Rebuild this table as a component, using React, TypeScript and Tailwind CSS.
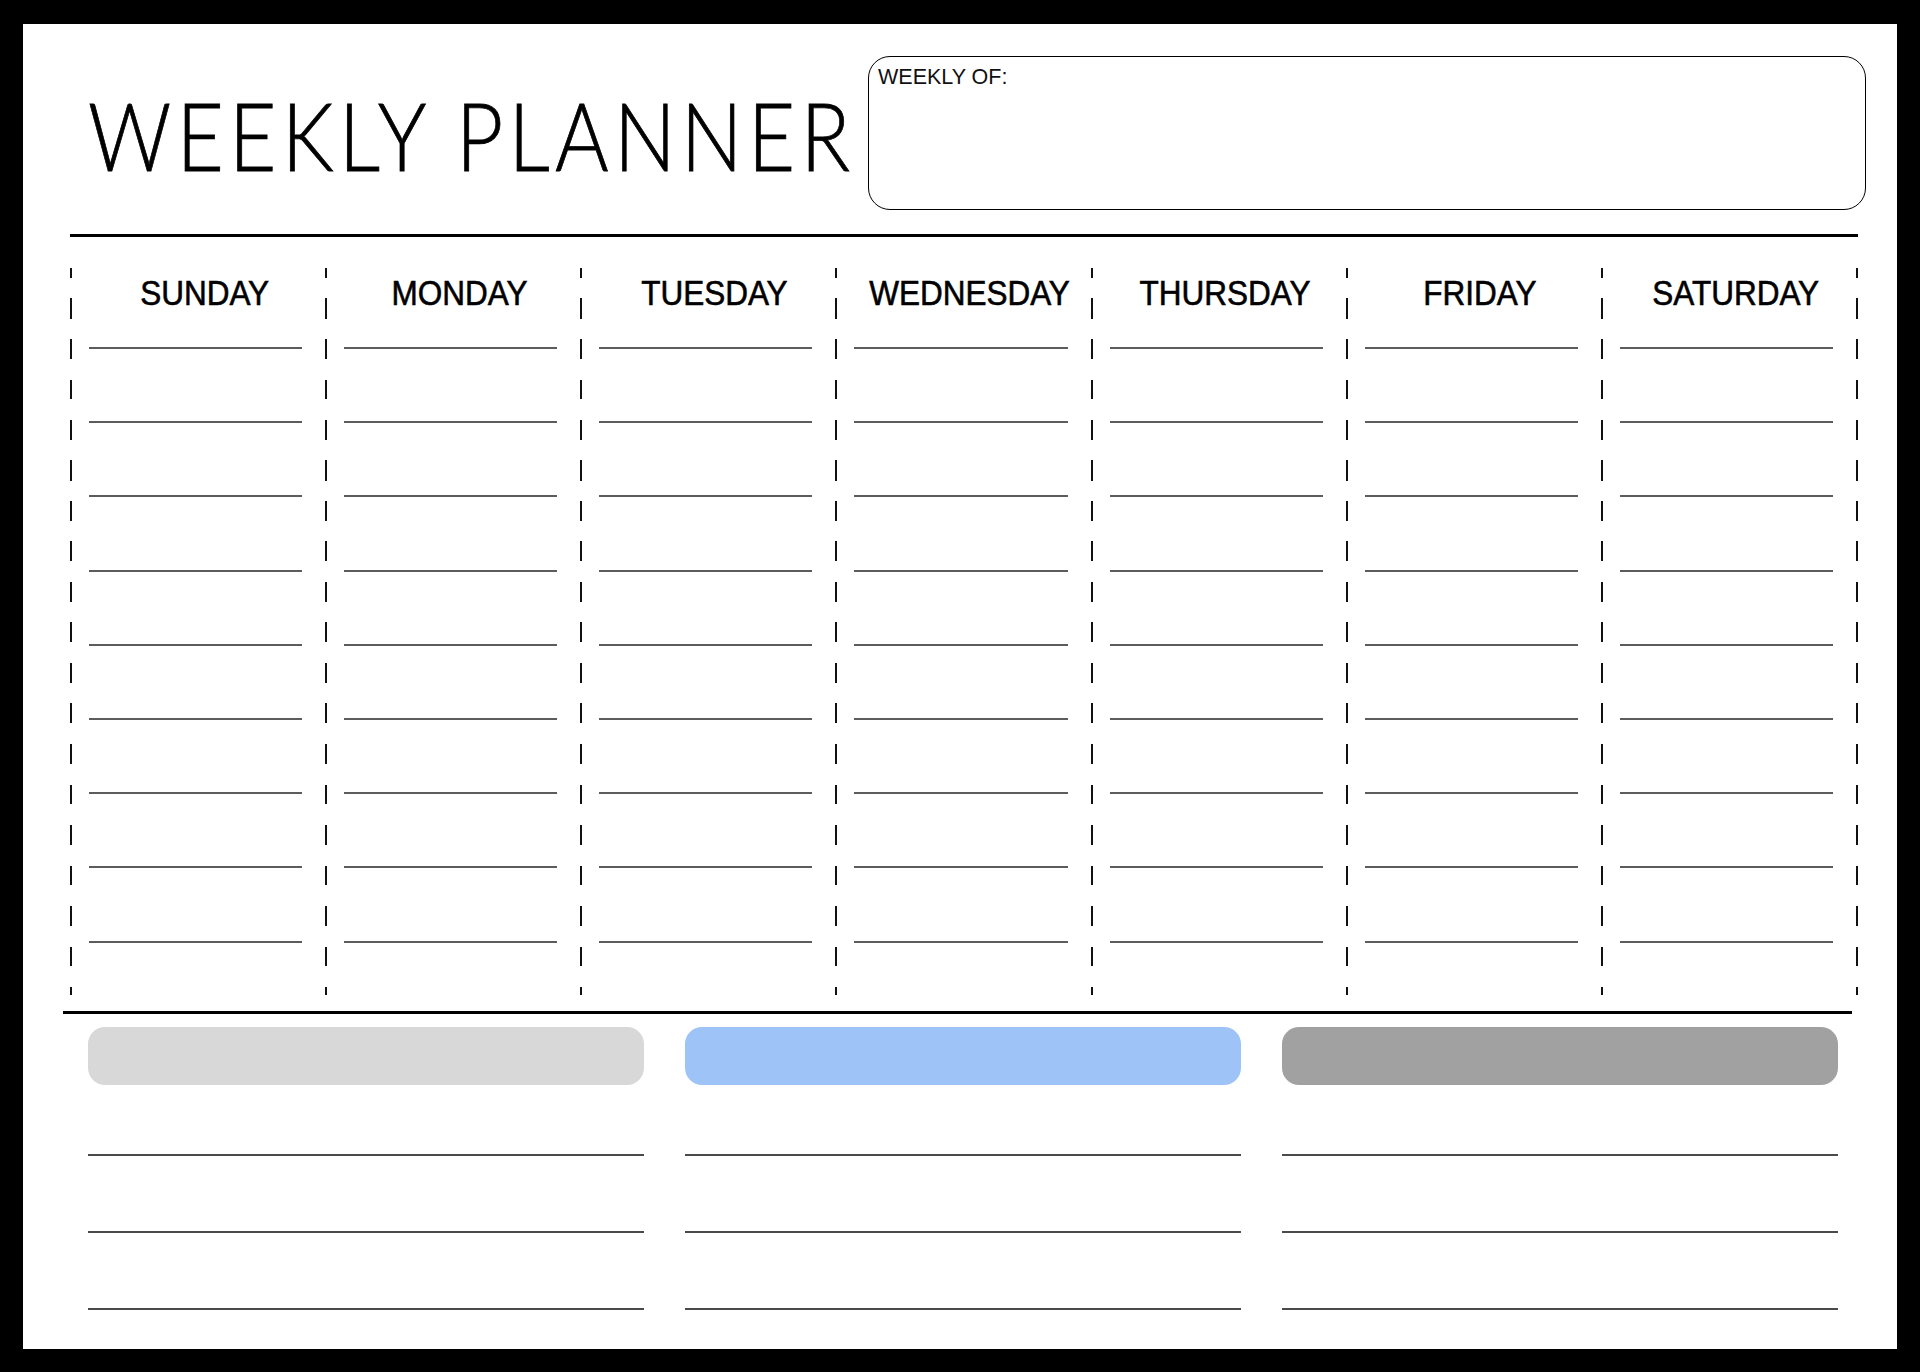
const days = ["SUNDAY", "MONDAY", "TUESDAY", "WEDNESDAY", "THURSDAY", "FRIDAY", "SATURDAY"];

const rows = [0, 1, 2, 3, 4, 5, 6, 7, 8];

const notes = [
  { color: "bg-[#d8d8d8]" },
  { color: "bg-[#9dc3f7]" },
  { color: "bg-[#a1a1a1]" },
];

function Dash() {
  return (
    <div className="w-[2px] h-[727px] shrink-0 bg-[repeating-linear-gradient(to_bottom,#111_0_10px,transparent_10px_30.5px,#111_30.5px_40.5px)]" />
  );
}

function DayColumn({ name }: { name: string }) {
  return (
    <div className="flex-1 flex flex-col">
      <div className="h-[79px] pt-[7px] pl-[12px] flex justify-center">
        <span className="block scale-x-[0.9] text-[35px] leading-none text-black font-['Liberation_Sans',Arial,sans-serif] [-webkit-text-stroke:0.6px_#000]">
          {name}
        </span>
      </div>
      <div className="flex flex-col gap-[72.2px] pl-[17px] pr-[23px]">
        {rows.map((r) => (
          <div key={r} className="h-[2px] bg-[#5c5c5c]" />
        ))}
      </div>
    </div>
  );
}

export default function App() {
  return (
    <div className="w-[1920px] h-[1372px] bg-black pt-[24px] px-[23px] pb-[23px]">
      <div className="bg-white h-[1325px] flex flex-col">
        {/* header */}
        <div className="flex items-start pt-[32px] pl-[65px] pr-[31px]">
          <div className="flex-1 min-w-0 h-[154px] flex items-center">
            <h1 className="origin-left scale-x-[0.87] text-[94px] leading-none font-light tracking-[6px] text-black whitespace-nowrap font-['Lato','Liberation_Sans',sans-serif] mt-[4px] [-webkit-text-stroke:0.8px_#000]">
              WEEKLY PLANNER
            </h1>
          </div>
          <div className="w-[998px] shrink-0 h-[154px] border-[1.5px] border-black rounded-[22px] pt-[10px] pl-[9px]">
            <p className="text-[21.5px] leading-none text-[#111] font-['Liberation_Sans',Arial,sans-serif]">
              WEEKLY OF:
            </p>
          </div>
        </div>

        <div className="mt-[24px] ml-[47px] w-[1788px] h-[3px] bg-black" />

        {/* days */}
        <div className="mt-[31px] ml-[47px] w-[1788px] flex">
          <Dash />
          {days.map((d) => (
            <div key={d} className="contents">
              <DayColumn name={d} />
              <Dash />
            </div>
          ))}
        </div>

        <div className="mt-[16px] ml-[40px] w-[1789px] h-[3px] bg-black" />

        {/* notes */}
        <div className="mt-[13px] ml-[65px] flex gap-[41px]">
          {notes.map((n, i) => (
            <div key={i} className="w-[556px] flex flex-col">
              <div className={`h-[58px] rounded-[17px] ${n.color}`} />
              <div className="mt-[69px] h-[2px] bg-[#4a4a4a]" />
              <div className="mt-[75px] h-[2px] bg-[#4a4a4a]" />
              <div className="mt-[75px] h-[2px] bg-[#4a4a4a]" />
            </div>
          ))}
        </div>
      </div>
    </div>
  );
}
